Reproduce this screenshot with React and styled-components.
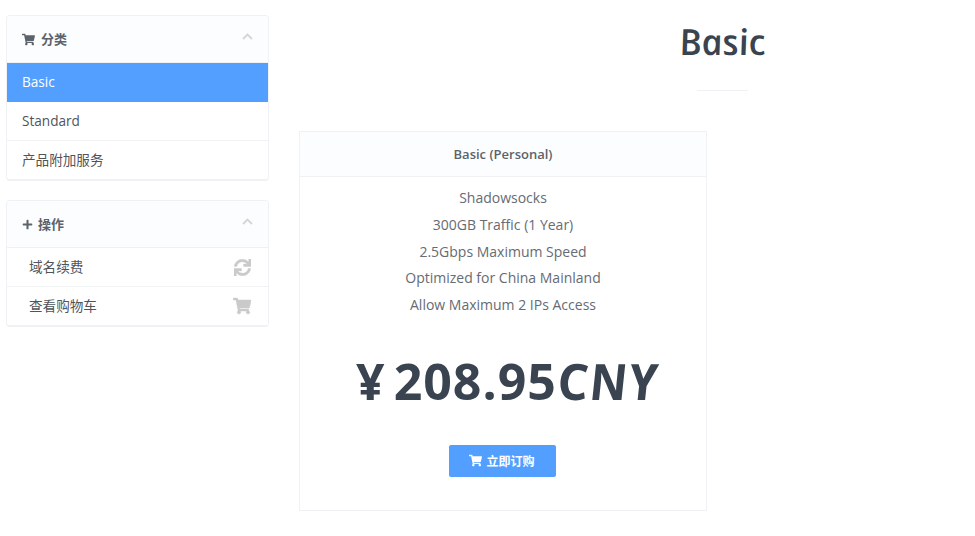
import React, { useState } from 'react';
import styled, { createGlobalStyle } from 'styled-components';
import { FaShoppingCart, FaPlus, FaSync } from 'react-icons/fa';

const categories = ['Basic', 'Standard', '产品附加服务'];

const actions = [
  { label: '域名续费', icon: FaSync, size: 17 },
  { label: '查看购物车', icon: FaShoppingCart, size: 18 },
];

const features = [
  'Shadowsocks',
  '300GB Traffic (1 Year)',
  '2.5Gbps Maximum Speed',
  'Optimized for China Mainland',
  'Allow Maximum 2 IPs Access',
];

const Chevron = () => (
  <ChevronIcon viewBox="0 0 11 7">
    <path d="M1 6 5.5 1.5 10 6" />
  </ChevronIcon>
);

const App = () => {
  const [active, setActive] = useState('Basic');

  return (
    <>
      <GlobalStyle />
      <Page>
        <Sidebar>
          <Panel>
            <PanelHeading>
              <FaShoppingCart size={13} />
              <PanelTitle>分类</PanelTitle>
              <Chevron />
            </PanelHeading>
            {categories.map((name) => (
              <PanelItem key={name} href="#" $active={name === active} onClick={() => setActive(name)}>
                <span>{name}</span>
              </PanelItem>
            ))}
          </Panel>

          <Panel>
            <PanelHeading>
              <FaPlus size={11} />
              <PanelTitle $tight>操作</PanelTitle>
              <Chevron />
            </PanelHeading>
            {actions.map(({ label, icon: Icon, size }) => (
              <PanelItem key={label} href="#" $indent>
                <span>{label}</span>
                <Icon size={size} />
              </PanelItem>
            ))}
          </Panel>
        </Sidebar>

        <Main>
          <Title><TitleText>Basic</TitleText></Title>
          <Divider />
          <Card>
            <CardHeader>Basic (Personal)</CardHeader>
            <Features>
              {features.map((feature) => (
                <li key={feature}>{feature}</li>
              ))}
            </Features>
            <Price>
              <Yen>¥</Yen>
              <Amount>208.95</Amount>
              <Currency>CNY</Currency>
            </Price>
            <OrderButton>
              <FaShoppingCart size={13} />
              立即订购
            </OrderButton>
          </Card>
        </Main>
      </Page>
    </>
  );
};

const GlobalStyle = createGlobalStyle`
  * {
    box-sizing: border-box;
  }

  body {
    margin: 0;
    background: #fff;
    color: #505459;
    font-family: "Open Sans", "Noto Sans CJK SC", sans-serif;
    font-size: 14px;
  }
`;

const Page = styled.div`
  display: flex;
  height: 536px;
  gap: 30px;
  padding: 15px 0 0 6px;
  overflow: hidden;
`;

const Sidebar = styled.aside`
  flex: 0 0 263px;
  display: flex;
  flex-direction: column;
  gap: 19px;
`;

const Panel = styled.section`
  border: 1px solid #eff1f4;
  border-bottom-width: 2px;
  border-radius: 4px;
  overflow: hidden;
`;

const PanelHeading = styled.header`
  display: flex;
  align-items: center;
  height: 47px;
  padding: 0 15px;
  background: #fbfdff;
  border-bottom: 1px solid #eff1f4;
  color: #5c636b;
`;

const PanelTitle = styled.h3`
  flex: 1;
  margin: 0 0 0 ${({ $tight }) => ($tight ? '5px' : '6px')};
  padding-bottom: 2px;
  font-size: 13px;
  font-weight: 700;
`;

const ChevronIcon = styled.svg`
  width: 11px;
  height: 7px;
  margin-bottom: 6px;
  fill: none;
  stroke: #d5d5d5;
  stroke-width: 1.8;
`;

const PanelItem = styled.a`
  display: flex;
  align-items: center;
  justify-content: space-between;
  height: 39px;
  padding: 0 17px 0 ${({ $indent }) => ($indent ? '22px' : '15px')};
  border-bottom: 1px solid ${({ $active }) => ($active ? '#529fff' : '#f1f2f4')};
  background: ${({ $active }) => ($active ? '#529fff' : '#fff')};
  color: ${({ $active }) => ($active ? '#fff' : '#505459')};
  font-size: 13.6px;
  text-decoration: none;

  &:last-child {
    border-bottom: none;
    height: 38px;
  }

  span {
    padding-bottom: 2px;
  }

  svg {
    color: #cacaca;
    stroke: currentColor;
    stroke-width: 14px;
  }
`;

const Main = styled.main`
  flex: 1;
  min-width: 0;
`;

const Title = styled.h1`
  height: 75px;
  margin: 0;
  padding: 2px 0 0 170px;
  color: #3a4350;
  font-family: "Comic Sans MS", "Open Sans", sans-serif;
  font-size: 36px;
  font-weight: 600;
  line-height: 50px;
  text-align: center;
`;

/* slanted lowercase letters stood upright, for the single-storey "a" */
const TitleText = styled.span`
  display: inline-block;
  font-style: italic;
  transform: skewX(10deg);
`;

const Divider = styled.hr`
  width: 51px;
  height: 1px;
  margin: 0 0 40px 398px;
  border: none;
  background: #eff1f4;
`;

const Card = styled.article`
  display: flex;
  flex-direction: column;
  align-items: center;
  width: 408px;
  height: 380px;
  border: 1px solid #eff1f4;
`;

const CardHeader = styled.header`
  width: 100%;
  height: 45px;
  background: #fbfdff;
  border-bottom: 1px solid #eff1f4;
  color: #5c636b;
  font-size: 13px;
  font-weight: 600;
  line-height: 45px;
  text-align: center;
`;

const Features = styled.ul`
  margin: 8px 0 0;
  padding: 0;
  color: #666b74;
  list-style: none;
  line-height: 26.8px;
  text-align: center;
`;

const Price = styled.div`
  display: flex;
  align-items: baseline;
  height: 70px;
  margin: 27px 0 0 8px;
  color: #3a4350;
  font-family: "Comic Sans MS", "Open Sans", sans-serif;
  font-size: 50px;
  font-weight: 700;
  line-height: 70px;
`;

const Yen = styled.span`
  margin-right: 9px;
`;

const Amount = styled.span`
  letter-spacing: 1px;
`;

const Currency = styled.span`
  font-style: italic;
  letter-spacing: 1.5px;
  transform: skewX(6deg);
`;

const OrderButton = styled.button`
  display: flex;
  align-items: center;
  justify-content: center;
  gap: 4px;
  width: 107px;
  height: 32px;
  margin: 29px 2px 0 0;
  border: none;
  border-radius: 2px;
  background: #529fff;
  color: #fff;
  font-family: "Open Sans", "Noto Sans CJK SC", sans-serif;
  font-size: 12px;
  font-weight: 700;
`;

export default App;
